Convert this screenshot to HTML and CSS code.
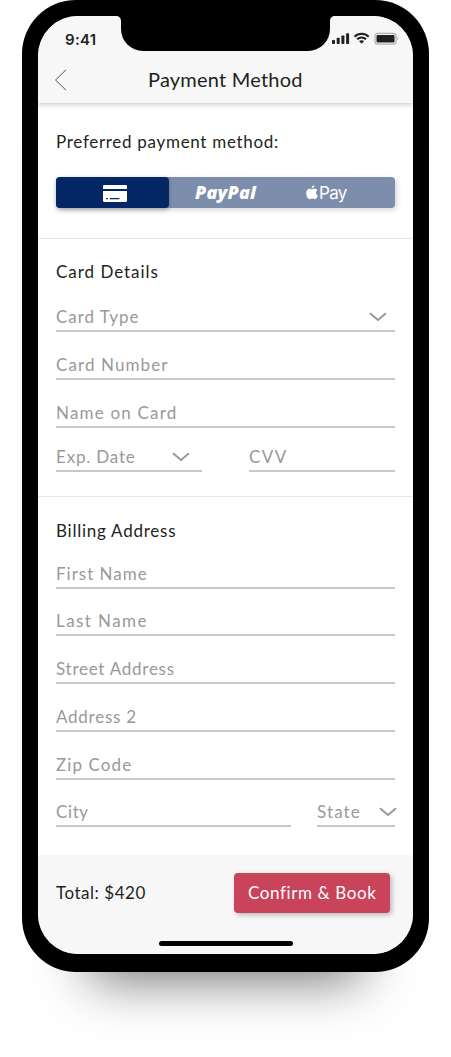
FILE: index.html
```
<!DOCTYPE html>
<html lang="en">
<head>
<meta charset="utf-8">
<title>Payment Method</title>
<link rel="stylesheet" href="styles.css">
</head>
<body>
<div class="phone">
  <main class="screen">
    <div class="notch">
      <svg class="ear ear-left" viewBox="0 0 5 5"><path d="M0 0H5V5C5 2 3 0 0 0Z"/></svg>
      <svg class="ear ear-right" viewBox="0 0 5 5"><path d="M5 0H0V5C0 2 2 0 5 0Z"/></svg>
    </div>
    <header class="top">
      <div class="status">
        <span class="clock">9:41</span>
        <svg class="signals" viewBox="0 0 67 14">
          <g fill="#231f20">
            <rect x="0" y="8" width="3" height="4" rx=".8"/>
            <rect x="4.7" y="5.8" width="3" height="6.2" rx=".8"/>
            <rect x="9.4" y="3.5" width="3" height="8.5" rx=".8"/>
            <rect x="14.1" y="1.2" width="3" height="10.8" rx=".8"/>
            <path d="M29.6 8.2c1 0 1.900.3 2.600.9l-2.600 2.700L27 9.100c.7-.6 1.600-.9 2.600-.9z"/>
          </g>
          <g fill="none" stroke="#231f20" stroke-width="1.900">
            <path d="M25.100 7.300a6.400 6.400 0 0 1 9 0"/>
            <path d="M22.500 4.700a10.200 10.200 0 0 1 14.200 0"/>
          </g>
          <rect x="43" y="1.300" width="21" height="10.800" rx="2.600" fill="none" stroke="#b3b1b2" stroke-width="1.200"/>
          <rect x="44.500" y="2.900" width="18" height="7.600" rx="1.200" fill="#231f20"/>
          <path d="M65.300 4.800c1.300.7 1.300 3.200 0 3.900z" fill="#b3b1b2"/>
        </svg>
      </div>
      <div class="nav">
        <svg class="back" viewBox="0 0 14 22"><path d="M12 .8 1.500 11l10.500 10.200" fill="none" stroke="#555" stroke-width="1"/></svg>
        <h1 class="title">Payment Method</h1>
      </div>
    </header>

    <section class="methods">
      <h2 class="label preferred">Preferred payment method:</h2>
      <div class="tabs">
        <div class="tab active">
          <svg class="card" viewBox="0 0 24 17"><path fill="#fff" d="M1.200 0h21.600Q24 0 24 1.200V4H0V1.200Q0 0 1.200 0zM0 6h24v9.800q0 1.200-1.200 1.200H1.200Q0 17 0 15.800zM3 13v1.200h1.800V13zm3.800 0v1.200h9.600V13z"/></svg>
        </div>
        <div class="tab tab-paypal"><span class="paypal">PayPal</span></div>
        <div class="tab tab-apple">
          <svg class="apple" viewBox="0 0 12 15"><path fill="#fff" d="M8.300.3c.1 1.700-1.100 3-2.600 3.100C5.500 1.800 6.800.5 8.300.3zM6 4.500c.7 0 1.400-.7 2.600-.7 1.200 0 2.300.5 2.900 1.400-2.300 1.400-1.900 4.400.4 5.300-.6 1.700-1.700 3.700-3 3.700-.9 0-1.400-.6-2.600-.6s-1.700.6-2.500.6C2 14.200.2 11.200.2 8.300.2 5.500 1.900 3.800 3.700 3.800c1 0 1.600.7 2.300.7z"/></svg>
          <span class="pay">Pay</span>
        </div>
      </div>
    </section>

    <section class="details">
      <h2 class="label card-details">Card Details</h2>
      <div class="field f-type"><span>Card Type</span><svg class="chev" viewBox="0 0 18 10"><path d="M1 1.200 9 8l8-6.800"/></svg></div>
      <div class="field f-number"><span>Card Number</span></div>
      <div class="field f-name"><span>Name on Card</span></div>
      <div class="row">
        <div class="field f-exp"><span>Exp. Date</span><svg class="chev" viewBox="0 0 18 10"><path d="M1 1.200 9 8l8-6.800"/></svg></div>
        <div class="field f-cvv"><span>CVV</span></div>
      </div>
    </section>

    <section class="billing">
      <h2 class="label billing-title">Billing Address</h2>
      <div class="field f-first"><span>First Name</span></div>
      <div class="field f-last"><span>Last Name</span></div>
      <div class="field f-street"><span>Street Address</span></div>
      <div class="field f-address"><span>Address 2</span></div>
      <div class="field f-zip"><span>Zip Code</span></div>
      <div class="row">
        <div class="field f-city"><span>City</span></div>
        <div class="field f-state"><span>State</span><svg class="chev" viewBox="0 0 18 10"><path d="M1 1.200 9 8l8-6.800"/></svg></div>
      </div>
    </section>

    <footer class="bottom">
      <div class="checkout">
        <span class="total">Total: $420</span>
        <button class="confirm">Confirm &amp; Book</button>
      </div>
      <div class="home"></div>
    </footer>
  </main>
</div>
</body>
</html>
```
FILE: styles.css
```
* { box-sizing: border-box; }

body {
  min-height: 1057px;
  margin: 0;
  background: #fff;
  color: #231f20;
  font-family: Lato, "Liberation Sans", sans-serif;
}

.phone {
  width: 407px;
  height: 972px;
  margin-left: 22px;
  padding: 16px 16px 18px;
  background: #000;
  border-radius: 54px;
  box-shadow: 0 76px 50px -68px rgba(0, 0, 0, .55);
}

.screen {
  position: relative;
  display: flex;
  flex-direction: column;
  height: 938px;
  background: #fff;
  border-radius: 40px;
  overflow: hidden;
}

.notch {
  position: absolute;
  z-index: 2;
  top: 0;
  left: 83px;
  width: 209px;
  height: 35px;
  background: #000;
  border-radius: 0 0 22px 22px;
}

.ear { position: absolute; top: 0; width: 5px; height: 5px; }
.ear-left { left: -5px; }
.ear-right { right: -5px; }

.top {
  position: relative;
  z-index: 1;
  height: 87px;
  background: #f7f7f7;
  box-shadow: 0 2px 4px rgba(0, 0, 0, .18);
}

.status {
  display: flex;
  justify-content: space-between;
  height: 40px;
  padding: 14px 14px 0 27px;
}

.clock { font: 600 15px/20px Inter, sans-serif; letter-spacing: .3px; }
.signals { width: 67px; height: 14px; margin-top: 2px; }

.nav {
  display: flex;
  align-items: center;
  height: 47px;
  padding-left: 16px;
}

.back { width: 14px; height: 22px; margin-top: 1px; }
.title { margin: -2px 0 0 80px; font-size: 20px; font-weight: 400; line-height: 24px; letter-spacing: .22px; }

.label { margin: 0; font-size: 17px; font-weight: 400; line-height: 20px; }
.preferred { letter-spacing: .7px; }
.card-details { letter-spacing: .97px; }
.billing-title { letter-spacing: .75px; }

.methods { height: 136px; padding: 29px 18px 0; border-bottom: 1px solid #e6e6e6; }

.tabs {
  display: flex;
  height: 31px;
  margin-top: 25px;
  color: #fff;
  background: #7d8dac;
  border-radius: 4px;
  box-shadow: 2px 2px 5px rgba(0, 0, 0, .16);
}

.tab { display: flex; align-items: center; width: 113px; }
.active {
  justify-content: center;
  padding: 2px 0 0 4px;
  background: #052665;
  border-radius: 4px;
  box-shadow: 0 2px 4px rgba(0, 0, 0, .25);
}
.card { width: 24px; height: 17px; }
.tab-paypal { padding: 0 0 2px 26px; }
.paypal { font: italic 800 18px/20px "Open Sans", sans-serif; letter-spacing: .2px; }
.tab-apple { padding-left: 24px; }
.apple { width: 12px; height: 15px; margin-bottom: 1px; }
.pay { margin: 1px 0 0 1px; font: 400 17px/20px Inter, sans-serif; letter-spacing: -.7px; }

.details { height: 258px; padding: 23px 18px 0; border-bottom: 1px solid #e6e6e6; }
.billing { height: 358px; padding: 24px 18px 0; }

.row { display: flex; justify-content: space-between; }

.field {
  display: flex;
  align-items: flex-end;
  justify-content: space-between;
  height: 48px;
  padding-bottom: 3px;
  color: #999;
  border-bottom: 2px solid #c8c8c8;
  font-size: 17px;
  line-height: 20px;
}

.chev { flex: none; width: 18px; height: 10px; margin: 0 8px 5px 0; fill: none; stroke: #999; stroke-width: 2; }

.f-type { height: 50px; letter-spacing: .95px; }
.f-number { letter-spacing: 1.1px; }
.f-name { letter-spacing: 1.2px; }
.f-exp, .f-cvv { width: 146px; height: 44px; }
.f-exp { letter-spacing: .82px; }
.f-exp .chev { margin-right: 12px; }
.f-cvv { letter-spacing: 1.5px; }
.f-first { height: 48px; letter-spacing: 1px; }
.f-last, .f-city, .f-state { height: 47px; }
.f-last { letter-spacing: 1.42px; }
.f-street, .f-address { letter-spacing: .74px; }
.f-zip { letter-spacing: 1.1px; }
.f-city { width: 235px; letter-spacing: .6px; }
.f-state { width: 78px; letter-spacing: 1.1px; }
.f-state .chev { margin-right: -2px; }

.bottom { height: 99px; background: #f7f7f7; }

.checkout {
  display: flex;
  align-items: center;
  justify-content: space-between;
  height: 58px;
  padding: 18px 23px 0 18px;
}

.total { font-size: 17px; line-height: 20px; letter-spacing: .52px; }

.confirm {
  width: 156px;
  height: 40px;
  padding: 0 0 0 14px;
  color: #fff;
  background: #c9435b;
  border: 0;
  border-radius: 4px;
  box-shadow: 2px 2px 5px rgba(0, 0, 0, .25);
  font: 400 17px/20px Lato, sans-serif;
  letter-spacing: .6px;
  text-align: left;
  white-space: nowrap;
}

.home { width: 134px; height: 5px; margin: 28px auto 0; background: #000; border-radius: 3px; }
```
